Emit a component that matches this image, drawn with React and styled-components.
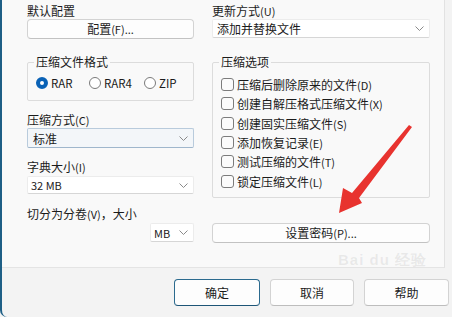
import React from "react";
import styled, { createGlobalStyle } from "styled-components";

const GlobalStyle = createGlobalStyle`
  html, body {
    margin: 0;
    padding: 0;
    background: #f3f3f3;
  }
  body {
    font-family: "Noto Sans CJK SC", "Noto Sans", sans-serif;
    font-size: 12px;
    color: #1b1b1b;
  }
`;

const Window = styled.div`
  position: relative;
  width: 452px;
  height: 317px;
  box-sizing: border-box;
  border-left: 2px solid #1e5f86;
  border-bottom-left-radius: 7px;
  background: #f3f3f3;
  display: flex;
  flex-direction: column;
  overflow: hidden;
`;

const Panel = styled.div`
  height: 268px;
  width: 443px;
  box-sizing: border-box;
  background: #f9f9f9;
  border-right: 1px solid #e2e2e2;
  border-bottom: 1px solid #e4e4e4;
  padding-left: 25px;
  display: flex;
  gap: 18px;
`;

const Column = styled.div`
  width: ${(p) => p.$width}px;
  display: flex;
  flex-direction: column;
`;

const Label = styled.div`
  height: 16px;
  line-height: 16px;
  margin-top: ${(p) => p.$top || 0}px;
  white-space: nowrap;
`;

const PushButton = styled.div`
  height: ${(p) => p.$height || 20}px;
  margin-top: ${(p) => p.$top || 0}px;
  box-sizing: border-box;
  border: 1px solid #d3d3d3;
  border-bottom-color: #c2c2c2;
  border-radius: 4px;
  background: #fdfdfd;
  display: flex;
  align-items: center;
  justify-content: center;
  line-height: 16px;
`;

const Select = styled.div`
  height: ${(p) => p.$height || 20}px;
  width: ${(p) => (p.$width ? `${p.$width}px` : "auto")};
  margin-top: ${(p) => p.$top || 0}px;
  align-self: ${(p) => (p.$right ? "flex-end" : "stretch")};
  box-sizing: border-box;
  border: 1px solid ${(p) => (p.$focus ? "#b9cbdc" : "#ececec")};
  border-bottom-color: ${(p) => (p.$focus ? "#9fb6cc" : "#d6d6d6")};
  border-radius: 2px;
  background: ${(p) => (p.$focus ? "#f3f6f9" : "#ffffff")};
  display: flex;
  align-items: center;
  justify-content: space-between;
  padding: 0 5px 0 ${(p) => p.$pad || 4}px;
  font-size: ${(p) => p.$font || 12}px;
`;

const Chevron = () => (
  <svg width="9" height="5" viewBox="0 0 9 5">
    <path d="M0.5 0.5 L4.5 4.5 L8.5 0.5" fill="none" stroke="#8a8a8a" strokeWidth="1" />
  </svg>
);

const Group = styled.fieldset`
  margin: ${(p) => p.$top}px 0 0 0;
  padding: ${(p) => p.$padTop}px 6px ${(p) => p.$padBottom}px 8px;
  border: 1px solid #dcdcdc;
  border-radius: 2px;
  min-width: 0;
`;

const Legend = styled.legend`
  padding: 0 2px;
  margin-left: -2px;
  line-height: 16px;
  font-size: 12px;
`;

const RadioRow = styled.div`
  height: 18px;
  display: flex;
  align-items: center;
`;

const Radio = styled.span`
  display: flex;
  align-items: center;
  gap: 3px;
  width: ${(p) => p.$width}px;
  font-size: 11.5px;
`;

const RadioDot = styled.span`
  width: 12px;
  height: 12px;
  box-sizing: border-box;
  border-radius: 50%;
  border: ${(p) => (p.$on ? "4px solid #0a62b6" : "1px solid #7a7a7a")};
  background: #ffffff;
`;

const CheckRow = styled.div`
  height: 19.3px;
  display: flex;
  align-items: center;
  gap: 3px;
  white-space: nowrap;
`;

const CheckBox = styled.span`
  width: 13px;
  height: 13px;
  box-sizing: border-box;
  border: 1px solid #7c7c7c;
  border-radius: 3px;
  background: #fbfbfb;
  flex-shrink: 0;
`;

const Mn = styled.span`
  font-size: 11px;
`;

const Footer = styled.div`
  flex: 1;
  display: flex;
  justify-content: flex-end;
  align-items: flex-start;
  gap: 10px;
  padding: 11px 3px 0 0;
`;

const DialogButton = styled.div`
  width: ${(p) => p.$width}px;
  height: 27px;
  box-sizing: border-box;
  border: 1px solid ${(p) => (p.$default ? "#2b6a8e" : "#d3d3d3")};
  border-bottom-color: ${(p) => (p.$default ? "#1d5577" : "#bdbdbd")};
  border-radius: 4px;
  background: #fdfdfd;
  display: flex;
  align-items: center;
  justify-content: center;
  font-size: 12px;
`;

const Arrow = styled.svg`
  position: absolute;
  left: 0;
  top: 0;
  pointer-events: none;
`;

const Watermark = styled.div`
  position: absolute;
  left: 336px;
  top: 252px;
  font-family: "Liberation Sans", sans-serif;
  font-size: 15px;
  line-height: 16px;
  font-weight: bold;
  color: rgba(120, 120, 120, 0.12);
  letter-spacing: 1px;
  pointer-events: none;
`;

const checks = [
  ["压缩后删除原来的文件", "D"],
  ["创建自解压格式压缩文件", "X"],
  ["创建固实压缩文件", "S"],
  ["添加恢复记录", "E"],
  ["测试压缩的文件", "T"],
  ["锁定压缩文件", "L"],
];

export default function App() {
  return (
    <>
      <GlobalStyle />
      <Window>
        <Panel>
          <Column $width={167}>
            <Label $top={3}>默认配置</Label>
            <PushButton>
              配置<Mn>(F)...</Mn>
            </PushButton>
            <Group $top={15} $padTop={4} $padBottom={8}>
              <Legend>压缩文件格式</Legend>
              <RadioRow>
                <Radio $width={53}>
                  <RadioDot $on />
                  RAR
                </Radio>
                <Radio $width={55}>
                  <RadioDot />
                  RAR4
                </Radio>
                <Radio $width={40}>
                  <RadioDot />
                  ZIP
                </Radio>
              </RadioRow>
            </Group>
            <Label $top={11}>
              压缩方式<Mn>(C)</Mn>
            </Label>
            <Select $focus $pad={5}>
              标准
              <Chevron />
            </Select>
            <Label $top={11}>
              字典大小<Mn>(I)</Mn>
            </Label>
            <Select $top={1} $height={18} $pad={3} $font={11}>
              32 MB
              <Chevron />
            </Select>
            <Label $top={12}>
              切分为分卷<Mn>(V)</Mn>，大小
            </Label>
            <Select $top={1} $height={19} $width={44} $right $pad={3} $font={11}>
              MB
              <Chevron />
            </Select>
          </Column>
          <Column $width={218}>
            <Label $top={3}>
              更新方式<Mn>(U)</Mn>
            </Label>
            <Select $height={19}>
              添加并替换文件
              <Chevron />
            </Select>
            <Group $top={16} $padTop={5} $padBottom={6}>
              <Legend>压缩选项</Legend>
              {checks.map(([text, key]) => (
                <CheckRow key={key}>
                  <CheckBox />
                  <span>
                    {text}
                    <Mn>({key})</Mn>
                  </span>
                </CheckRow>
              ))}
            </Group>
            <PushButton $top={25}>
              设置密码<Mn>(P)...</Mn>
            </PushButton>
          </Column>
        </Panel>
        <Footer>
          <DialogButton $width={86} $default>
            确定
          </DialogButton>
          <DialogButton $width={84}>取消</DialogButton>
          <DialogButton $width={85}>帮助</DialogButton>
        </Footer>
        <Watermark>Bai du 经验</Watermark>
        <Arrow width="452" height="317" viewBox="0 0 452 317">
          <polygon
            points="407,125 410,127 357,198 360,203 337,213 341,188 350,193"
            fill="#e8332f"
          />
        </Arrow>
      </Window>
    </>
  );
}
